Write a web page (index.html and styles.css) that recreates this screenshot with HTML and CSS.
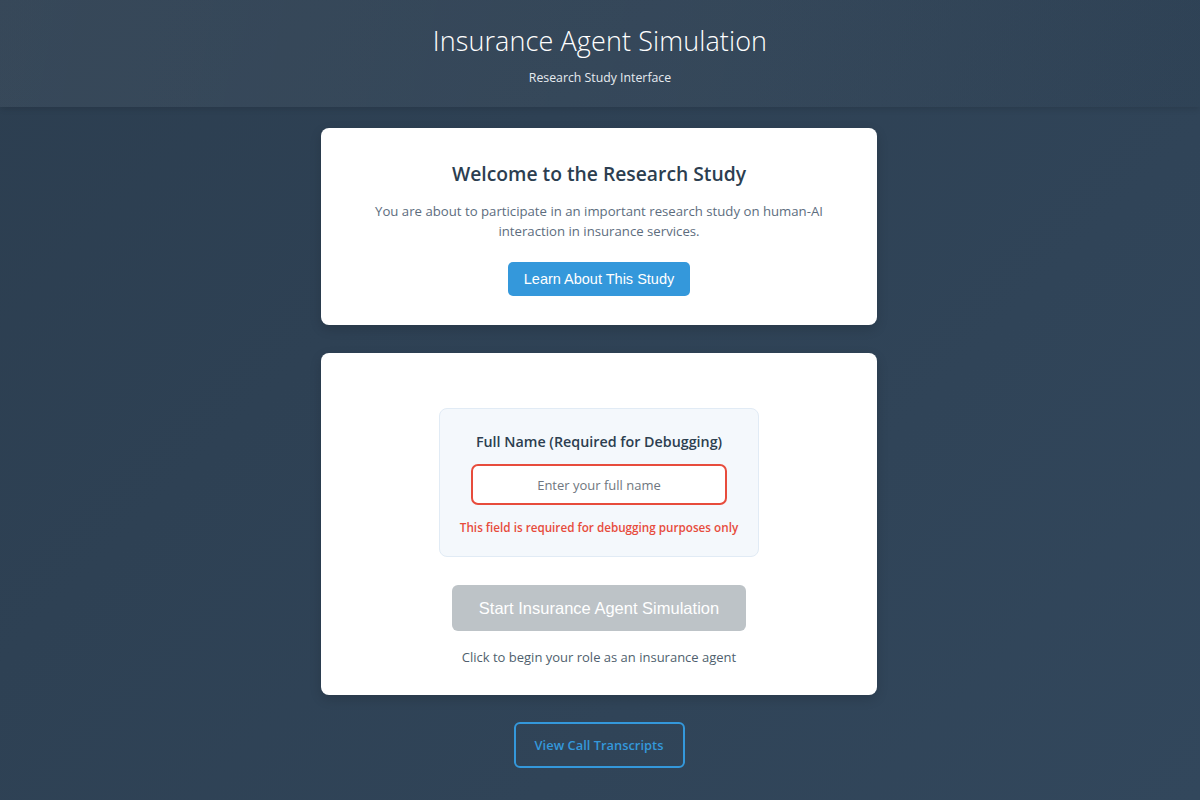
FILE: index.html
```html
<!DOCTYPE html>
<html lang="en">
<head>
<meta charset="utf-8">
<title>Insurance Agent Simulation</title>
<link rel="stylesheet" href="styles.css">
</head>
<body>
<header class="site-header">
  <h1 class="site-title">Insurance Agent Simulation</h1>
  <p class="site-subtitle">Research Study Interface</p>
</header>
<main class="main">
  <section class="card welcome">
    <h2 class="welcome-title">Welcome to the Research Study</h2>
    <p class="welcome-text">You are about to participate in an important research study on human-AI interaction in insurance services.</p>
    <button class="btn-primary" type="button">Learn About This Study</button>
  </section>
  <section class="card start">
    <div class="name-box">
      <label class="name-label" for="fullname">Full Name (Required for Debugging)</label>
      <input class="name-input" id="fullname" type="text" placeholder="Enter your full name">
      <p class="name-error">This field is required for debugging purposes only</p>
    </div>
    <button class="btn-start" type="button" disabled>Start Insurance Agent Simulation</button>
    <p class="start-caption">Click to begin your role as an insurance agent</p>
  </section>
  <button class="btn-outline" type="button">View Call Transcripts</button>
</main>
</body>
</html>
```
FILE: styles.css
```css
* { box-sizing: border-box; }
html, body { margin: 0; padding: 0; }
body {
  min-height: 800px;
  background: linear-gradient(135deg, #2c3e50 0%, #32475c 100%);
  font-family: "Open Sans", "Noto Sans", sans-serif;
  color: #2c3e50;
}
.site-header {
  height: 107px;
  background: linear-gradient(100deg, rgba(255,255,255,0.05) 0%, rgba(255,255,255,0.03) 60%, rgba(0,0,0,0.02) 100%);
  box-shadow: 0 2px 6px rgba(0,0,0,0.12);
  text-align: center;
  padding-top: 23px;
}
.site-title {
  margin: 0;
  font-weight: 300;
  font-size: 27px;
  line-height: 36px;
  color: #ffffff;
  letter-spacing: 0.1px;
}
.site-subtitle {
  margin: 11px 0 0;
  font-size: 12.3px;
  line-height: 16px;
  color: #e6ebf0;
}
.main {
  width: 556px;
  margin: 21px 0 0 calc(50% - 279px);
  display: flex;
  flex-direction: column;
  align-items: center;
}
.card {
  width: 100%;
  background: #ffffff;
  border-radius: 8px;
  box-shadow: 0 4px 12px rgba(0,0,0,0.15);
  text-align: center;
  display: flex;
  flex-direction: column;
  align-items: center;
}
.welcome {
  height: 197px;
  padding-top: 33px;
}
.welcome-title {
  margin: 0;
  font-size: 19.3px;
  line-height: 26px;
  font-weight: 600;
  color: #2c3e50;
}
.welcome-text {
  margin: 14px 0 0;
  width: 460px;
  font-size: 13.2px;
  line-height: 20px;
  color: #5d6d7e;
}
.btn-primary {
  margin-top: 21px;
  width: 182px;
  height: 34px;
  border: none;
  border-radius: 5px;
  background: #3498db;
  color: #ffffff;
  font-family: "Liberation Sans", Arial, sans-serif;
  font-size: 14.5px;
  cursor: pointer;
}
.start {
  margin-top: 28px;
  height: 342px;
  padding-top: 55px;
}
.name-box {
  width: 320px;
  height: 149px;
  background: #f4f8fc;
  border: 1px solid #e1ebf5;
  border-radius: 8px;
  padding-top: 23px;
  display: flex;
  flex-direction: column;
  align-items: center;
}
.name-label {
  font-size: 14.3px;
  line-height: 20px;
  font-weight: 600;
  color: #2c3e50;
}
.name-input {
  margin-top: 12px;
  width: 256px;
  height: 41px;
  border: 2px solid #e74c3c;
  border-radius: 7px;
  background: #ffffff;
  text-align: center;
  font-family: "Open Sans", "Noto Sans", sans-serif;
  font-size: 13px;
  color: #2c3e50;
  outline: none;
}
.name-input::placeholder { color: #6f7780; }
.name-error {
  margin: 14px 0 0;
  font-size: 11.7px;
  line-height: 16px;
  font-weight: 600;
  color: #e74c3c;
}
.btn-start {
  margin-top: 28px;
  width: 294px;
  height: 46px;
  border: none;
  border-radius: 6px;
  background: #bdc3c7;
  color: #ffffff;
  font-family: "Liberation Sans", Arial, sans-serif;
  font-size: 16.5px;
}
.start-caption {
  margin: 17px 0 0;
  font-size: 13px;
  line-height: 18px;
  color: #4f5f6e;
}
.btn-outline {
  margin-top: 27px;
  width: 171px;
  height: 46px;
  border: 2px solid #3498db;
  border-radius: 6px;
  background: transparent;
  color: #3498db;
  font-family: "Open Sans", "Noto Sans", sans-serif;
  font-size: 12.9px;
  font-weight: 600;
  cursor: pointer;
}
```
